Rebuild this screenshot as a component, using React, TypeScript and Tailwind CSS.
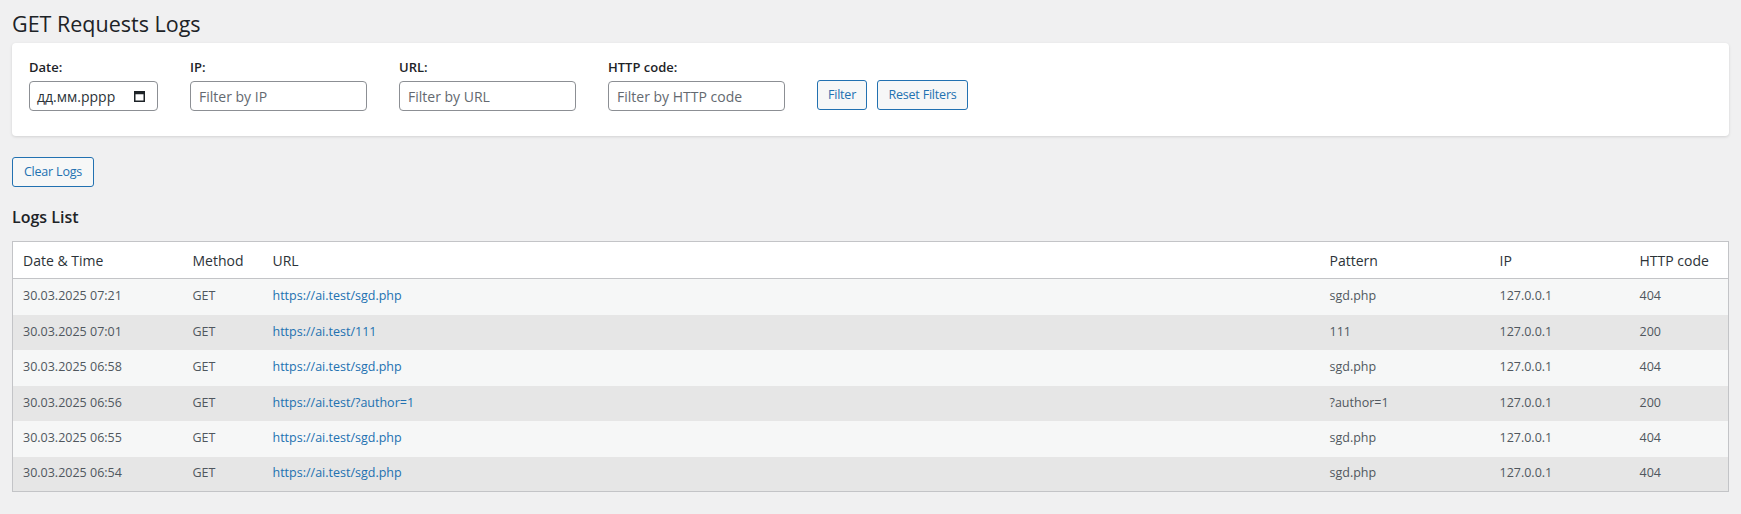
import React from "react";

type LogRow = {
  date: string;
  method: string;
  url: string;
  pattern: string;
  ip: string;
  code: string;
};

const rows: LogRow[] = [
  { date: "30.03.2025 07:21", method: "GET", url: "https://ai.test/sgd.php", pattern: "sgd.php", ip: "127.0.0.1", code: "404" },
  { date: "30.03.2025 07:01", method: "GET", url: "https://ai.test/111", pattern: "111", ip: "127.0.0.1", code: "200" },
  { date: "30.03.2025 06:58", method: "GET", url: "https://ai.test/sgd.php", pattern: "sgd.php", ip: "127.0.0.1", code: "404" },
  { date: "30.03.2025 06:56", method: "GET", url: "https://ai.test/?author=1", pattern: "?author=1", ip: "127.0.0.1", code: "200" },
  { date: "30.03.2025 06:55", method: "GET", url: "https://ai.test/sgd.php", pattern: "sgd.php", ip: "127.0.0.1", code: "404" },
  { date: "30.03.2025 06:54", method: "GET", url: "https://ai.test/sgd.php", pattern: "sgd.php", ip: "127.0.0.1", code: "404" },
];

const columns = [
  { title: "Date & Time", width: "w-[170px]" },
  { title: "Method", width: "w-[80px]" },
  { title: "URL", width: "" },
  { title: "Pattern", width: "w-[170px]" },
  { title: "IP", width: "w-[140px]" },
  { title: "HTTP code", width: "w-[99px]" },
];

function CalendarIcon() {
  return (
    <svg width="11" height="12" viewBox="0 0 11 12" fill="none">
      <rect x="0.75" y="1.75" width="9.5" height="9.5" stroke="#1d2327" strokeWidth="1.5" />
      <rect x="0.75" y="1.75" width="9.5" height="2.5" fill="#1d2327" />
    </svg>
  );
}

function Field({ label, width, children }: { label: string; width: string; children: React.ReactNode }) {
  return (
    <div className={`flex flex-col ${width}`}>
      <label className="mb-[5px] h-[18px] text-[13px] font-semibold leading-[18px] text-[#1d2327]">{label}</label>
      {children}
    </div>
  );
}

const inputCls =
  "h-[30px] w-full rounded-[4px] border border-[#8c8f94] bg-white px-[8px] text-[14px] text-[#2c3338] outline-none placeholder:text-[#646970]";

const buttonCls =
  "block h-[30px] whitespace-nowrap rounded-[3px] border border-[#2271b1] bg-[#f6f7f7] px-0 text-[12.5px] tracking-[-0.2px] text-[#2271b1]";

export default function App() {
  return (
    <div
      className="min-h-screen bg-[#f0f0f1] px-[12px] pt-[10px]"
      style={{ fontFamily: '"Open Sans", "Noto Sans", sans-serif' }}
    >
      <h1 className="mb-[6px] text-[21.5px] font-normal leading-[27px] text-[#1d2327]">GET Requests Logs</h1>

      <div className="rounded-[4px] bg-white px-[17px] pb-[25px] pt-[15px] shadow-[0_1px_3px_rgba(0,0,0,0.13)]">
        <div className="flex items-end gap-[32px]">
          <Field label="Date:" width="w-[129px]">
            <div className="flex h-[30px] w-full items-center justify-between rounded-[4px] border border-[#8c8f94] bg-white pl-[7px] pr-[12px] text-[14px] text-[#2c3338]">
              <span>дд.мм.рррр</span>
              <CalendarIcon />
            </div>
          </Field>
          <Field label="IP:" width="w-[177px]">
            <input className={inputCls} placeholder="Filter by IP" />
          </Field>
          <Field label="URL:" width="w-[177px]">
            <input className={inputCls} placeholder="Filter by URL" />
          </Field>
          <Field label="HTTP code:" width="w-[177px]">
            <input className={inputCls} placeholder="Filter by HTTP code" />
          </Field>
          <div className="mb-[1px] flex gap-[10px]">
            <button className={`${buttonCls} w-[50px]`}>Filter</button>
            <button className={`${buttonCls} w-[91px]`}>Reset Filters</button>
          </div>
        </div>
      </div>

      <button className={`${buttonCls} mt-[21px] w-[82px]`}>Clear Logs</button>

      <h2 className="mb-[13px] mt-[19px] text-[16px] font-semibold leading-[22px] text-[#1d2327]">Logs List</h2>

      <table className="w-full table-fixed border-collapse border border-[#c3c4c7] text-left">
        <thead>
          <tr className="h-[37px] border-b border-[#c3c4c7] bg-white">
            {columns.map((c) => (
              <th key={c.title} className={`${c.width} px-[10px] text-[14px] font-normal text-[#2c3338]`}>
                {c.title}
              </th>
            ))}
          </tr>
        </thead>
        <tbody>
          {rows.map((r, i) => (
            <tr key={i} className={i % 2 === 0 ? "h-[36px] bg-[#f6f7f7]" : "h-[35px] bg-[#e6e6e6]"}>
              <td className="px-[10px] text-[12.5px] text-[#50575e]">{r.date}</td>
              <td className="px-[10px] text-[12.5px] text-[#50575e]">{r.method}</td>
              <td className="px-[10px] text-[12.5px]">
                <a href="#" className="text-[#2271b1]">{r.url}</a>
              </td>
              <td className="px-[10px] text-[12.5px] text-[#50575e]">{r.pattern}</td>
              <td className="px-[10px] text-[12.5px] text-[#50575e]">{r.ip}</td>
              <td className="px-[10px] text-[12.5px] text-[#50575e]">{r.code}</td>
            </tr>
          ))}
        </tbody>
      </table>
    </div>
  );
}
